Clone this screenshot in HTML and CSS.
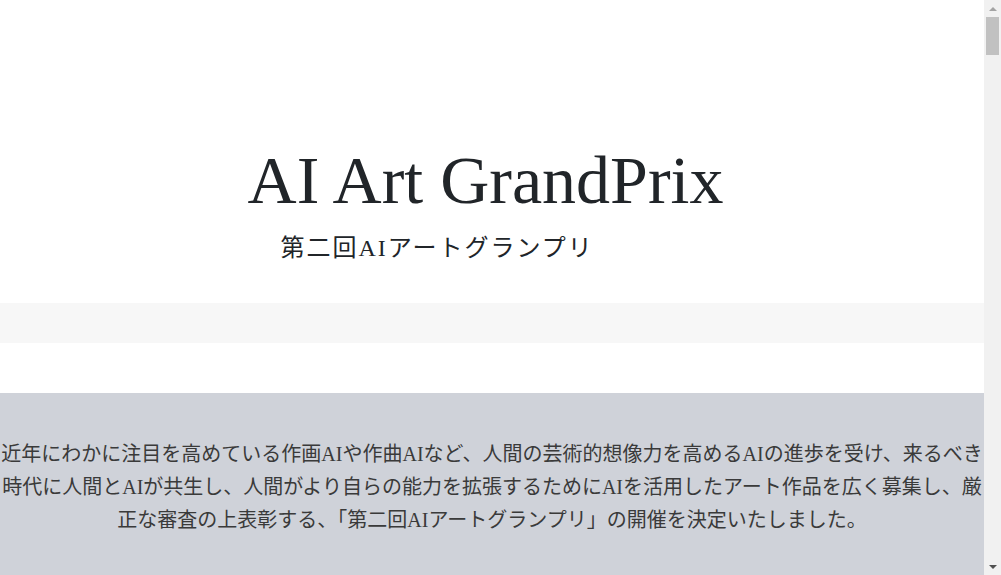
FILE: index.html
```html
<!DOCTYPE html>
<html lang="ja">
<head>
    <meta charset="UTF-8">
    <meta name="viewport" content="width=device-width, initial-scale=1.0">
    <title>AI Art GrandPrix</title>
    <link rel="stylesheet" href="styles.css">
</head>
<body>
    <header class="hero">
        <div class="hero-inner">
            <h1 class="hero-title">AI Art GrandPrix</h1>
            <p class="hero-sub">第二回AIアートグランプリ</p>
        </div>
    </header>

    <div class="band"></div>

    <main class="content">
        <section class="intro">
            <p>近年にわかに注目を高めている作画AIや作曲AIなど、人間の芸術的想像力を高めるAIの進歩を受け、来るべき時代に人間とAIが共生し、人間がより自らの能力を拡張するためにAIを活用したアート作品を広く募集し、厳正な審査の上表彰する、「第二回AIアートグランプリ」の開催を決定いたしました。</p>
        </section>
    </main>

    <!-- scroll rail on the right edge -->
    <div class="rail">
        <span class="rail-btn"><span class="arrow arrow-up"></span></span>
        <span class="rail-track"><span class="rail-thumb"></span></span>
        <span class="rail-btn"><span class="arrow arrow-down"></span></span>
    </div>
</body>
</html>
```

FILE: styles.css
```css
body {
    margin: 0;
    padding-right: 17px;
    font-family: 'Liberation Serif', 'Noto Sans CJK JP', serif;
    color: #212529;
    background-color: #fff;
}
.hero {
    height: 303px;
    padding-top: 140px;
    box-sizing: border-box;
    text-align: center;
}
.hero-inner {
    display: inline-block;
    text-align: left;
    padding-right: 13px;
}
.hero-title {
    margin: 0;
    font-size: 68px;
    font-weight: normal;
    line-height: 1.2;
}
.hero-sub {
    margin: 12px 0 0 33px;
    font-size: 24px;
    line-height: 1.2;
    letter-spacing: 2px;
}
.band {
    height: 40px;
    background-color: #f7f7f7;
}
.content {
    margin-top: 50px;
    min-height: 7800px;
    background-color: #cfd2d9;
}
.intro {
    padding: 45px 0 60px;
    text-align: center;
}
.intro p {
    margin: 0;
    font-size: 20px;
    line-height: 33px;
    color: #3a3a3a;
}

.rail {
    position: fixed;
    top: 0;
    right: 0;
    bottom: 0;
    width: 17px;
    display: flex;
    flex-direction: column;
    background-color: #f1f1f1;
}
.rail-btn {
    height: 17px;
    display: flex;
    align-items: center;
    justify-content: center;
}
.rail-track {
    flex: 1;
    padding: 0 2px;
}
.rail-thumb {
    display: block;
    height: 38px;
    background-color: #c1c1c1;
}
.arrow {
    width: 0;
    height: 0;
    border-left: 4px solid transparent;
    border-right: 4px solid transparent;
}
.arrow-up {
    border-bottom: 4px solid #a3a3a3;
}
.arrow-down {
    border-top: 4px solid #505050;
}
```
